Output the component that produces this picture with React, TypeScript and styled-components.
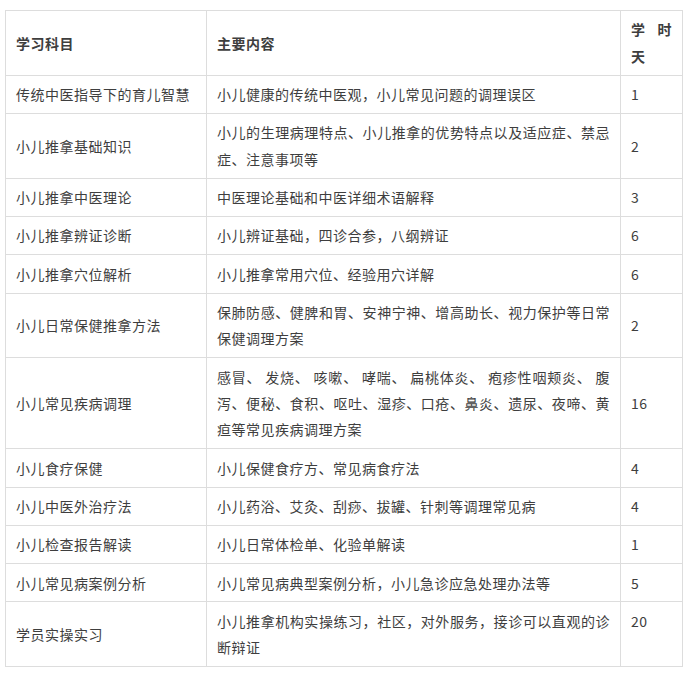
import React from "react";
import styled, { createGlobalStyle } from "styled-components";

const GlobalStyle = createGlobalStyle`
  html, body {
    margin: 0;
    padding: 0;
    background: #ffffff;
  }
  body {
    font-family: "Noto Sans CJK SC", "Noto Sans", sans-serif;
  }
`;

const Page = styled.div`
  padding: 10px 5px 8px 5px;
`;

const Table = styled.table`
  width: 677px;
  table-layout: fixed;
  border-collapse: collapse;
  font-family: "Noto Sans CJK SC", "Noto Sans", sans-serif;
  font-size: 14px;
  letter-spacing: 0.5px;
  line-height: 26.4px;
  color: #3e3e3e;
`;

const HeadCell = styled.th`
  border: 1px solid #dddddd;
  padding: 5.45px 10px;
  text-align: justify;
  font-weight: bold;
  vertical-align: middle;
  word-break: break-all;
`;

const Cell = styled.td<{ $top?: boolean }>`
  border: 1px solid #dddddd;
  padding: 5.45px 10px;
  text-align: justify;
  font-weight: normal;
  vertical-align: ${(p) => (p.$top ? "top" : "middle")};
  word-break: break-all;
`;

type Row = { subject: string; content: string; days: string; top?: boolean };

const rows: Row[] = [
  {
    subject: "传统中医指导下的育儿智慧",
    content: "小儿健康的传统中医观，小儿常见问题的调理误区",
    days: "1",
  },
  {
    subject: "小儿推拿基础知识",
    content: "小儿的生理病理特点、小儿推拿的优势特点以及适应症、禁忌症、注意事项等",
    days: "2",
  },
  { subject: "小儿推拿中医理论", content: "中医理论基础和中医详细术语解释", days: "3" },
  { subject: "小儿推拿辨证诊断", content: "小儿辨证基础，四诊合参，八纲辨证", days: "6" },
  { subject: "小儿推拿穴位解析", content: "小儿推拿常用穴位、经验用穴详解", days: "6" },
  {
    subject: "小儿日常保健推拿方法",
    content: "保肺防感、健脾和胃、安神宁神、增高助长、视力保护等日常保健调理方案",
    days: "2",
  },
  {
    subject: "小儿常见疾病调理",
    content:
      "感冒、 发烧、 咳嗽、 哮喘、 扁桃体炎、 疱疹性咽颊炎、 腹泻、便秘、食积、呕吐、湿疹、口疮、鼻炎、遗尿、夜啼、黄疸等常见疾病调理方案",
    days: "16",
  },
  { subject: "小儿食疗保健", content: "小儿保健食疗方、常见病食疗法", days: "4" },
  {
    subject: "小儿中医外治疗法",
    content: "小儿药浴、艾灸、刮痧、拔罐、针刺等调理常见病",
    days: "4",
  },
  { subject: "小儿检查报告解读", content: "小儿日常体检单、化验单解读", days: "1" },
  {
    subject: "小儿常见病案例分析",
    content: "小儿常见病典型案例分析，小儿急诊应急处理办法等",
    days: "5",
  },
  {
    subject: "学员实操实习",
    content: "小儿推拿机构实操练习，社区，对外服务，接诊可以直观的诊断辩证",
    days: "20",
    top: true,
  },
];

export default function App() {
  return (
    <Page>
      <GlobalStyle />
      <Table>
        <colgroup>
          <col style={{ width: 201 }} />
          <col style={{ width: 414 }} />
          <col style={{ width: 62 }} />
        </colgroup>
        <thead>
          <tr>
            <HeadCell>学习科目</HeadCell>
            <HeadCell>主要内容</HeadCell>
            <HeadCell>学时天</HeadCell>
          </tr>
        </thead>
        <tbody>
          {rows.map((r) => (
            <tr key={r.subject}>
              <Cell>{r.subject}</Cell>
              <Cell>{r.content}</Cell>
              <Cell $top={r.top}>{r.days}</Cell>
            </tr>
          ))}
        </tbody>
      </Table>
    </Page>
  );
}
